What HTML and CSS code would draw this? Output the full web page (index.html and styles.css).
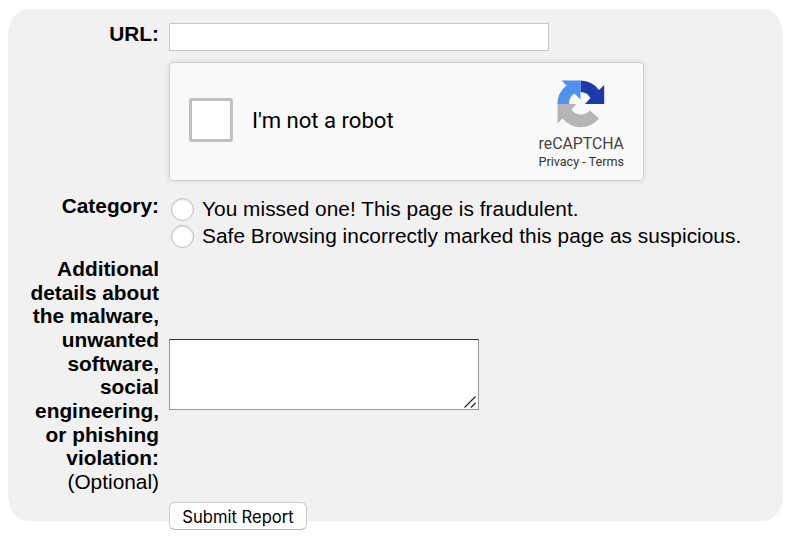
FILE: index.html
```html
<!DOCTYPE html>
<html lang="en">
<head>
<meta charset="utf-8">
<title>Report</title>
<link rel="stylesheet" href="styles.css">
</head>
<body>
<form class="panel">
  <label class="label url-label" for="url">URL:</label>
  <input class="url" id="url" type="text">
  <div class="captcha">
    <span class="check"></span>
    <span class="robot">I'm not a robot</span>
    <div class="brand">
      <svg class="logo" width="48" height="48" viewBox="0 0 48 48">
        <path fill="#1c3aa9" d="M23.500.5A23.500 23.500 0 0 1 42 10L47.200 5V24H28L33.500 18A12 12 0 0 0 23.500 12Z"/>
        <path fill="#5290ee" d="M23.500.5H4.500L9.500 5.500A23.500 23.500 0 0 0 .5 24H12A12 12 0 0 1 17.500 13.500L23.500 19.500Z"/>
        <path fill="#b5b5b5" d="M.5 24V43.500L5.500 38.500A23.500 23.500 0 0 0 42 38.500L33 30.500A12 12 0 0 1 14.500 29.800L19 24Z"/>
      </svg>
      <span class="name">reCAPTCHA</span>
      <span class="links">Privacy - Terms</span>
    </div>
  </div>
  <span class="label cat-label">Category:</span>
  <div class="choices">
    <label class="choice"><input type="radio" name="c"><span>You missed one! This page is fraudulent.</span></label>
    <label class="choice"><input type="radio" name="c"><span>Safe Browsing incorrectly marked this page as suspicious.</span></label>
  </div>
  <label class="label" for="details">Additional<br>details about<br>the malware,<br>unwanted<br>software,<br>social<br>engineering,<br>or phishing<br>violation:<br><span class="optional">(Optional)</span></label>
  <div class="details-box">
    <textarea class="details" id="details"></textarea>
    <svg class="grip" width="12" height="12" viewBox="0 0 12 12"><path d="M.5 11.500L11.500.5M7 11.500L11.500 7" fill="none" stroke="#222" stroke-width="1.200"/></svg>
  </div>
  <button class="submit" type="button">Submit Report</button>
</form>
</body>
</html>
```
FILE: styles.css
```css
* { box-sizing: border-box; }
body {
  margin: 0;
  display: flow-root;
  min-height: 542px;
  background: #fff;
  font-family: "Liberation Sans", Arial, sans-serif;
  font-size: 20.85px;
  line-height: 23.65px;
  color: #000;
}
.panel {
  width: 775px;
  height: 512px;
  margin: 9px 0 0 8px;
  padding-top: 14px;
  background: #f1f1f1;
  border-radius: 20px / 26px;
  display: grid;
  grid-template-columns: 151px 1fr;
  grid-template-rows: 39px 134px 61px 245px 28px;
  column-gap: 10px;
  white-space: nowrap;
}
.label { text-align: right; font-weight: bold; }
.url-label { margin-top: -1px; }
.cat-label { margin-top: -2px; }
.optional { font-weight: normal; }
.url {
  width: 380px;
  height: 28px;
  border: 1px solid #c8c8c8;
  background: #fff;
  padding: 0;
}
.captcha {
  grid-column: 2;
  width: 475px;
  height: 119px;
  background: #f9f9f9;
  border: 1px solid #d0d0d0;
  border-radius: 4px;
  box-shadow: 0 0 4px 1px rgba(0, 0, 0, .08);
  display: flex;
  align-items: center;
  padding: 0 19px;
  font-family: Roboto, sans-serif;
}
.check {
  width: 44px;
  height: 44px;
  margin-top: -3px;
  background: #fff;
  border: 3px solid #c1c1c1;
  border-radius: 3px;
}
.robot { margin: -2px 0 0 19px; font-size: 22.1px; }
.brand {
  margin-left: auto;
  padding-top: 7px;
  display: flex;
  flex-direction: column;
  align-items: center;
  color: #444;
}
.name { font-size: 15.8px; line-height: 18px; margin-top: 7px; }
.links { font-size: 12.6px; line-height: 16px; margin-top: 1px; color: #333; }
.choices { margin-top: -1px; }
.choice { display: flex; align-items: center; height: 27px; }
.choice input {
  appearance: none;
  width: 23px;
  height: 23px;
  margin: 2px 8px 0 2px;
  border: 1px solid #bdbdbd;
  border-radius: 50%;
  background: #fff;
  box-shadow: inset 0 1px 2px rgba(0, 0, 0, .13);
}
.choice span { letter-spacing: .03px; }
.details-box { position: relative; width: 310px; height: 71px; margin-top: 82px; }
.details {
  display: block;
  width: 310px;
  height: 71px;
  resize: none;
  background: #fff;
  border: 1px solid #999;
  border-top-color: #333;
}
.grip { position: absolute; right: 3px; bottom: 2px; }
.submit {
  grid-column: 2;
  width: 138px;
  height: 28px;
  padding: 2px 0 0;
  font: 16.6px Inter, sans-serif;
  color: #000;
  background: #fff;
  border: 1px solid #ccc;
  border-bottom-color: #b8b8b8;
  border-radius: 6px;
}
```
